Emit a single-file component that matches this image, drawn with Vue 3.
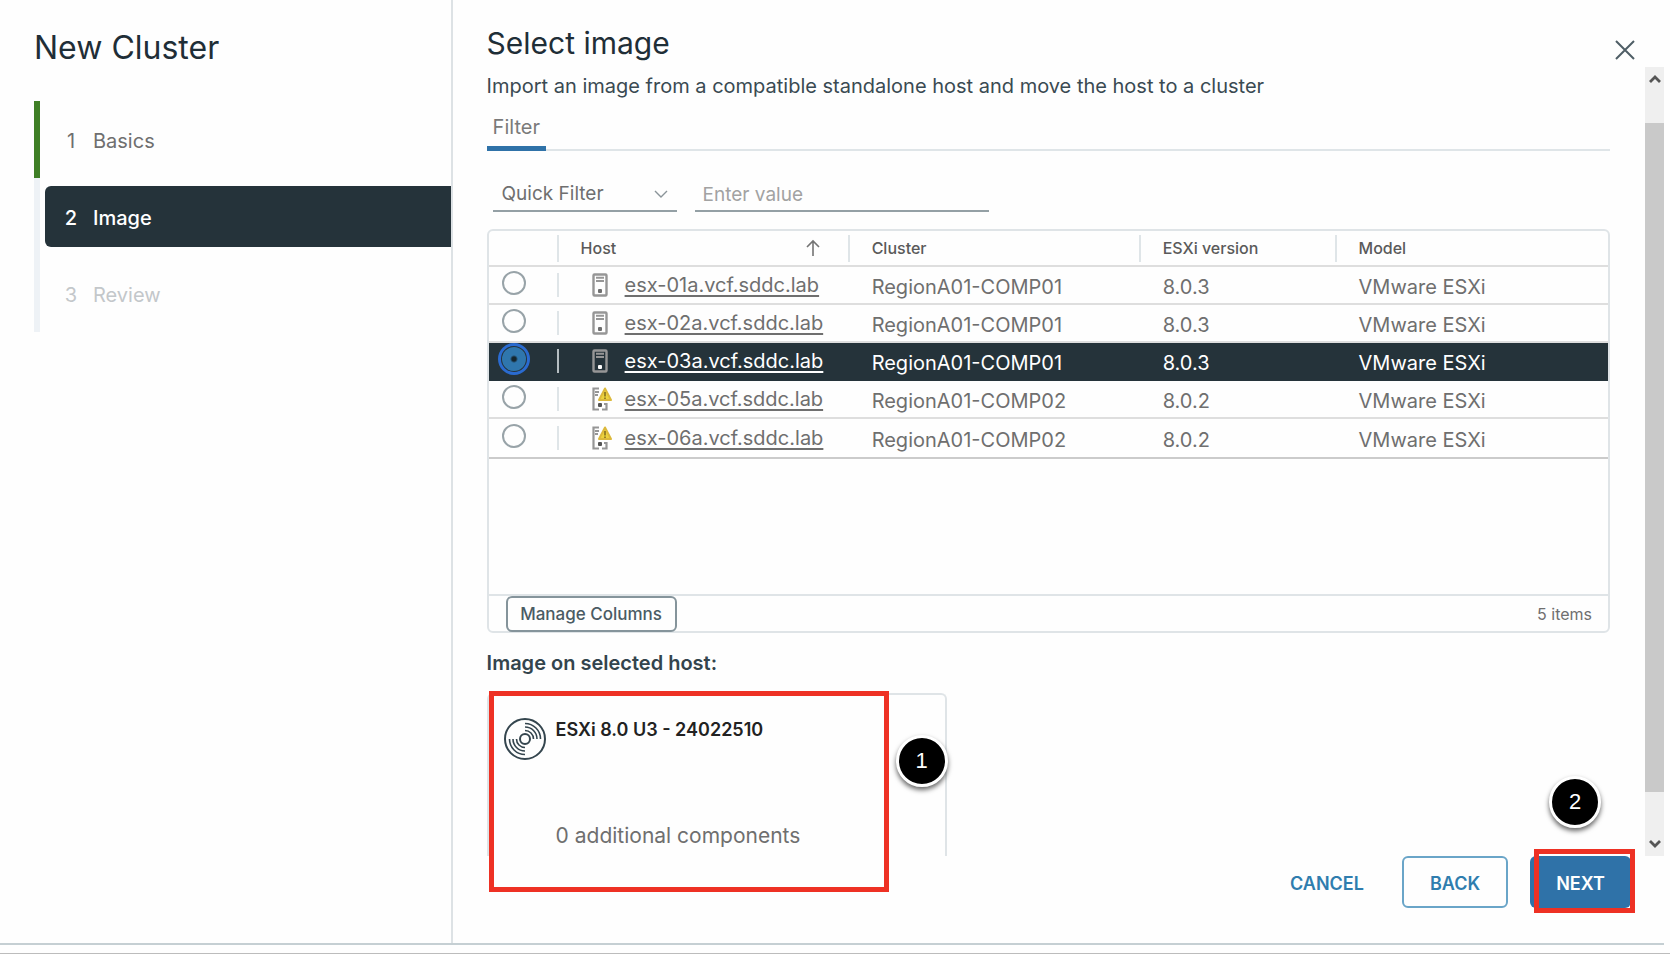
<script setup>
import { ref } from 'vue'

const steps = [
  { n: 1, label: 'Basics', state: 'done' },
  { n: 2, label: 'Image', state: 'active' },
  { n: 3, label: 'Review', state: 'pending' },
]

const hosts = [
  { name: 'esx-01a.vcf.sddc.lab', cluster: 'RegionA01-COMP01', version: '8.0.3', model: 'VMware ESXi', warn: false },
  { name: 'esx-02a.vcf.sddc.lab', cluster: 'RegionA01-COMP01', version: '8.0.3', model: 'VMware ESXi', warn: false },
  { name: 'esx-03a.vcf.sddc.lab', cluster: 'RegionA01-COMP01', version: '8.0.3', model: 'VMware ESXi', warn: false },
  { name: 'esx-05a.vcf.sddc.lab', cluster: 'RegionA01-COMP02', version: '8.0.2', model: 'VMware ESXi', warn: true },
  { name: 'esx-06a.vcf.sddc.lab', cluster: 'RegionA01-COMP02', version: '8.0.2', model: 'VMware ESXi', warn: true },
]

const selected = ref('esx-03a.vcf.sddc.lab')
const query = ref('')
</script>

<template>
  <div class="page">
    <div class="wizard">
      <aside class="side">
        <h1>New Cluster</h1>
        <ol class="steps">
          <li v-for="s in steps" :key="s.n" :class="s.state">
            <button type="button" class="step" :disabled="s.state === 'pending'">
              <span class="num">{{ s.n }}</span><span>{{ s.label }}</span>
            </button>
          </li>
        </ol>
      </aside>

      <main class="main">
        <button type="button" class="close" aria-label="Close">
          <svg width="20" height="20" viewBox="0 0 20 20"><path d="M1 1 19 19M19 1 1 19" fill="none" stroke="#4f5e66" stroke-width="2" /></svg>
        </button>

        <div class="content">
          <h2>Select image</h2>
          <p class="lead">Import an image from a compatible standalone host and move the host to a cluster</p>
          <div class="tabs" role="tablist">
            <button type="button" role="tab" aria-selected="true" class="tab">Filter</button>
          </div>

          <div class="filters">
            <div class="pick">
              <select aria-label="Filter type"><option>Quick Filter</option></select>
              <svg width="14" height="9" viewBox="0 0 14 9"><path d="M1 1 7 7 13 1" fill="none" stroke="#8a9499" stroke-width="1.4" /></svg>
            </div>
            <input v-model="query" type="text" class="value" placeholder="Enter value" aria-label="Filter value">
          </div>

          <section class="grid">
            <div class="grid-body">
              <table>
                <colgroup><col class="c-radio"><col class="c-wide"><col class="c-wide"><col class="c-version"><col></colgroup>
                <thead>
                  <tr>
                    <th aria-label="Select"></th>
                    <th scope="col"><div class="cell"><i class="bar"></i><span class="grow">Host</span>
                      <svg class="sort" width="16" height="18" viewBox="0 0 16 18"><path d="M8 17V2M2 8 8 2l6 6" fill="none" stroke="#747474" stroke-width="1.6" /></svg>
                    </div></th>
                    <th scope="col"><div class="cell"><i class="bar"></i>Cluster</div></th>
                    <th scope="col"><div class="cell"><i class="bar"></i>ESXi version</div></th>
                    <th scope="col"><div class="cell"><i class="bar"></i>Model</div></th>
                  </tr>
                </thead>
                <tbody>
                  <tr v-for="h in hosts" :key="h.name" :class="{ on: selected === h.name }">
                    <td><div class="radio-cell"><input v-model="selected" type="radio" name="host" :value="h.name" :aria-label="h.name"></div></td>
                    <td>
                      <div class="host">
                        <i class="bar"></i>
                        <svg v-if="!h.warn" width="20" height="24" viewBox="0 0 20 24">
                          <rect class="shell" x="1.500" y="1.500" width="13" height="21" rx="1" fill="none" stroke-width="2.400" />
                          <path class="shell" d="M4 4.800h8M4 8h8" stroke-width="2" />
                          <rect x="6" y="16" width="4" height="4" rx="1" fill="currentColor" />
                        </svg>
                        <svg v-else width="20" height="24" viewBox="0 0 20 24">
                          <path class="shell" d="M7 1.500H1.500v21H7M10 22.500h4.500V17H12" fill="none" stroke-width="2.200" />
                          <path class="shell" d="M3 5h4M3 8h3" stroke-width="2" />
                          <rect x="6" y="16" width="4" height="4" rx="1" fill="#555" />
                          <path d="M13 1.500 19 13H7z" fill="#ecd23c" stroke="#dcb93c" stroke-width="2" stroke-linejoin="round" />
                          <path d="M13 5v4.500M13 10.500v1.500" stroke="#7d681c" stroke-width="1.500" />
                        </svg>
                        <a href="#">{{ h.name }}</a>
                      </div>
                    </td>
                    <td class="text">{{ h.cluster }}</td>
                    <td class="text">{{ h.version }}</td>
                    <td class="text">{{ h.model }}</td>
                  </tr>
                </tbody>
              </table>
            </div>
            <div class="grid-foot">
              <button type="button" class="manage">Manage Columns</button>
              <span class="count">5 items</span>
            </div>
          </section>

          <h3>Image on selected host:</h3>
          <section class="card">
            <svg class="disc" width="42" height="42" viewBox="0 0 42 42" fill="none" stroke="#34454e" stroke-width="2">
              <circle cx="21" cy="21" r="20" />
              <circle cx="21" cy="21" r="5" />
              <path d="M21 12.500a8.500 8.500 0 0 1 8.500 8.500M21 9a12 12 0 0 1 12 12M21 5.500a15.500 15.500 0 0 1 15.500 15.500M21 29.500a8.500 8.500 0 0 1-8.500-8.500M21 33a12 12 0 0 1-12-12M21 36.500a15.500 15.500 0 0 1-15.500-15.500" stroke-width="1.600" />
            </svg>
            <div>
              <strong>ESXi 8.0 U3 - 24022510</strong>
              <p>0 additional components</p>
            </div>
            <div class="frame card-frame"></div>
            <span class="badge badge-one">1</span>
          </section>
        </div>

        <div class="scroll" aria-hidden="true">
          <svg width="14" height="10" viewBox="0 0 14 10"><path d="M2 8 7 3l5 5" fill="none" stroke="#555" stroke-width="2.800" /></svg>
          <div class="track"><div class="thumb"></div></div>
          <svg width="14" height="10" viewBox="0 0 14 10"><path d="M2 2l5 5 5-5" fill="none" stroke="#555" stroke-width="2.800" /></svg>
        </div>

        <footer class="actions">
          <button type="button" class="btn link">CANCEL</button>
          <button type="button" class="btn outline">BACK</button>
          <div class="next-wrap">
            <button type="button" class="btn primary">NEXT</button>
            <div class="frame next-frame"></div>
            <span class="badge badge-two">2</span>
          </div>
        </footer>
      </main>
    </div>
  </div>
</template>

<style>
body { margin: 0; background: #fefefe; }
</style>

<style scoped>
* { box-sizing: border-box; }
.page {
  min-height: 100vh;
  display: flex;
  padding-bottom: 8px;
  border-bottom: 1px solid #bcbcbc;
  font-family: Inter, "Liberation Sans", sans-serif;
  font-size: 20px;
  line-height: 24px;
  color: #6f6f6f;
}
button, input, select { font: inherit; color: inherit; margin: 0; }
button { padding: 0; border: 0; background: none; cursor: pointer; }
h1, h2, h3, p, ol { margin: 0; padding: 0; font-weight: 400; }

.wizard { flex: 1; display: flex; margin-right: 6px; border-bottom: 2px solid #c5cfd3; }

.side { width: 27.200%; border-right: 2px solid #dde2e5; padding: 28px 0 0 34px; }
h1 { font-size: 32px; line-height: 40px; color: #1f2e37; }
.steps { list-style: none; margin-top: 33px; }
.steps li { height: 77px; padding: 8px 0 8px 5px; border-left: 6px solid #eef2f6; display: flex; }
.steps li.done { border-color: #3f7f26; }
.step { flex: 1; display: flex; align-items: center; gap: 12px; padding: 2px 0 0 16px; border-radius: 6px 0 0 6px; }
.num { width: 20px; text-align: center; }
.active .step { background: #25333a; color: #fff; font-weight: 500; }
.pending .step { color: #c3c7ca; }

.main {
  flex: 1;
  min-width: 0;
  position: relative;
  display: grid;
  grid-template-columns: 1fr 19px;
  grid-template-rows: 1fr auto;
  column-gap: 35px;
  padding-left: 34px;
}
.close { position: absolute; top: 40px; right: 29px; width: 20px; height: 20px; }
.close svg { display: block; }
.content { min-width: 0; display: flex; flex-direction: column; padding-top: 26px; }
h2 { font-size: 30px; line-height: 34px; color: #1f2e37; }
.lead { margin-top: 14px; color: #3a4a52; }
.tabs { margin-top: 16px; height: 37px; display: flex; border-bottom: 2px solid #dfe5e8; }
.tab { height: 37px; padding: 0 6px 6px; border-bottom: 5px solid #2f72a8; color: #7a7a7a; }

.filters { display: flex; gap: 18px; margin-top: 27px; padding-left: 6px; font-size: 19px; }
.pick { position: relative; width: 184px; }
.pick select { appearance: none; width: 100%; height: 34px; padding: 0 9px; border: 0; border-bottom: 2px solid #94a0a5; border-radius: 0; background: none; }
.pick svg { position: absolute; right: 9px; top: 12px; pointer-events: none; }
.value { width: 294px; height: 34px; padding: 0 8px; border: 0; border-bottom: 2px solid #94a0a5; background: none; }
.value::placeholder { color: #a2a2a2; opacity: 1; }

.grid { margin-top: 17px; border: 2px solid #dfe4e7; border-radius: 6px; }
.grid-body { min-height: 365px; border-bottom: 2px solid #dfe4e7; }
table { width: 100%; table-layout: fixed; border-collapse: collapse; }
.c-radio { width: 68px; }
.c-wide { width: 26%; }
.c-version { width: 17.500%; }
th, td { padding: 0; text-align: left; vertical-align: middle; white-space: nowrap; }
th { height: 35px; font-size: 16px; font-weight: 500; color: #5a5a5a; border-bottom: 2px solid #dedede; }
td { height: 38px; border-bottom: 2px solid #dedede; }
tbody tr:last-child td { height: 40px; border-color: #cbcbcb; }
.cell, .host { display: flex; align-items: center; }
.grow { flex: 1; }
.sort { margin-right: 27px; }
.bar { width: 2px; height: 27px; margin-right: 22px; background: #dfe5e8; }
td.text { padding: 3px 0 0 24px; }
.host .bar { height: 24px; margin-right: 33px; }
.host svg { margin-right: 13px; }
.host a { color: inherit; text-decoration-thickness: 2px; text-underline-offset: 3px; }
.shell { stroke: #969696; }
.radio-cell { display: flex; justify-content: center; padding: 0 18px 4px 0; }
.radio-cell input { appearance: none; width: 24px; height: 24px; border: 2px solid #98a3a8; border-radius: 50%; background: #fefefe; }
.radio-cell input:checked {
  border: 0;
  background: radial-gradient(circle, #15262f 0 2px, #2f76ad 4px);
  outline: 3px solid #2a6bd0;
  outline-offset: 1px;
}
tr.on { background: #25333a; color: #fff; }
tr.on td { border-color: #25333a; }
tr.on .bar { background: #b5bdc1; }
.grid-foot { display: flex; justify-content: space-between; align-items: center; height: 35px; padding: 0 16px 0 17px; font-size: 16px; }
.manage { width: 171px; height: 36px; border: 2px solid #85949b; border-radius: 6px; background: #fefefe; color: #4a5b64; font-size: 17px; font-weight: 500; }

h3 { margin-top: 18px; font-size: 20px; font-weight: 600; color: #33444d; }
.card {
  position: relative;
  flex: 1;
  width: 460px;
  margin-top: 18px;
  min-height: 162px;
  display: flex;
  align-items: flex-start;
  gap: 10px;
  padding: 23px 0 0 15px;
  border: 2px solid #dfe4e7;
  border-bottom: 0;
  border-radius: 6px 6px 0 0;
}
.card strong { display: block; font-size: 18px; font-weight: 600; color: #222; }
.card p { margin-top: 82px; font-size: 21px; }
.frame { position: absolute; border: 5px solid #ee3124; pointer-events: none; }
.card-frame { left: 0; top: -4px; width: 400px; height: 201px; }
.badge {
  position: absolute;
  width: 52px;
  height: 52px;
  border: 3px solid #fff;
  border-radius: 50%;
  background: #000;
  color: #fff;
  font-family: "Liberation Sans", sans-serif;
  font-size: 22px;
  line-height: 46px;
  text-align: center;
  box-shadow: 0 3px 5px rgba(0, 0, 0, 0.6);
}
.badge-one { left: 407px; top: 40px; }

.scroll { margin-top: 67px; display: flex; flex-direction: column; align-items: center; justify-content: space-between; padding: 7px 0; background: #efefef; }
.track { flex: 1; width: 100%; padding: 39px 0 47px; }
.thumb { height: 100%; background: #c9c9c9; }

.actions { grid-column: 1 / -1; display: flex; justify-content: flex-end; padding: 0 33px 35px 0; }
.btn { height: 52px; padding-top: 3px; border-radius: 6px; font-size: 18px; font-weight: 600; color: #2f7dae; }
.link { width: 106px; margin-right: 22px; }
.outline { width: 106px; border: 2px solid #6aa5c8; }
.next-wrap { position: relative; margin-left: 22px; }
.primary { width: 101px; background: #2f72a8; color: #fff; }
.next-frame { left: 4px; top: -7px; width: 101px; height: 64px; }
.badge-two { left: 19px; top: -80px; }
</style>
